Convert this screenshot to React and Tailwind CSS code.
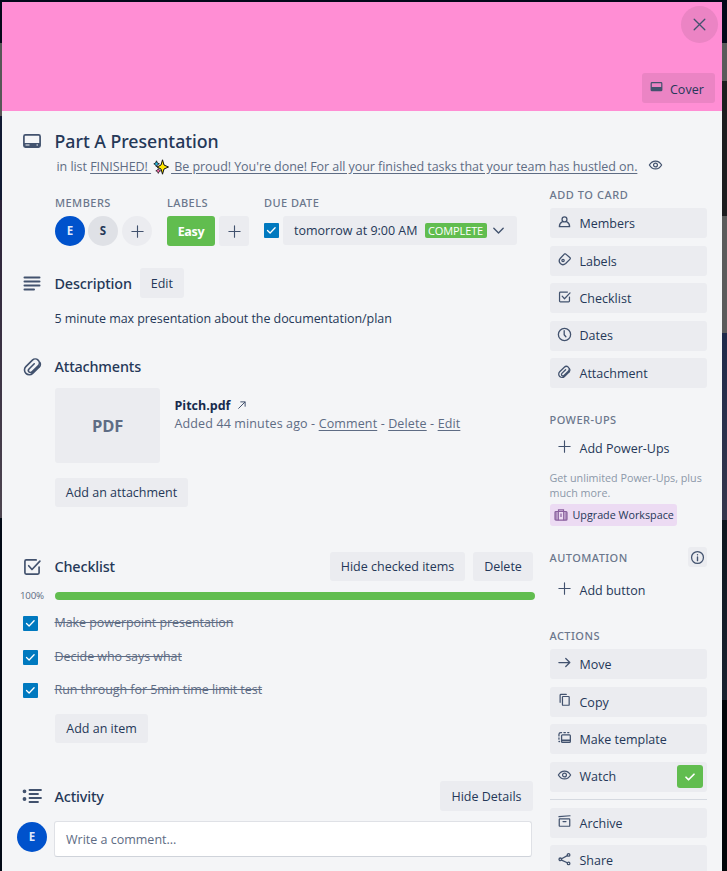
function Icon({ className = "h-[15px] w-[15px]", children, sw = 1.7 }) {
  return (
    <svg viewBox="0 0 24 24" className={`shrink-0 ${className}`} fill="none" stroke="currentColor" strokeWidth={sw} strokeLinecap="round" strokeLinejoin="round">
      {children}
    </svg>
  );
}

const PersonIcon = () => (
  <Icon className="h-[14px] w-[15px]" sw={2.2}>
    <circle cx="12" cy="7.5" r="4.2" />
    <path d="M8.5 11.5C5 13 3.2 15.8 3.2 20h17.6c0-4.200-1.800-7-5.300-8.500" />
  </Icon>
);
const LabelIcon = () => (
  <Icon className="h-[14px] w-[15px]" sw={2.2}>
    <path d="M12 3.200h1.800L21.500 10a1.500 1.500 0 0 1 0 2.200L14 19.600c-3 2.700-6.500 2.600-9 .2-2.500-2.600-2.500-6.300 0-9Z" />
    <circle cx="9.500" cy="14.500" r="2" />
  </Icon>
);
const CheckIcon = ({ className = "h-[14px] w-[15px]", sw = 2.1 }) => (
  <Icon className={className} sw={sw}>
    <path d="M17 3.500H5A1.500 1.500 0 0 0 3.500 5v14A1.500 1.500 0 0 0 5 20.500h14a1.500 1.500 0 0 0 1.500-1.500v-7" />
    <path d="m8 10.500 4 4.500L21.500 5" />
  </Icon>
);
const ClockIcon = () => (
  <Icon sw={2.1}>
    <circle cx="12" cy="12" r="9.800" />
    <path d="M11.500 6v6.500l2.700 3" />
  </Icon>
);
const ClipIcon = ({ className = "h-[14px] w-[14px]", sw = 2.2 }) => (
  <Icon className={className} sw={sw}>
    <path d="m21 11.500-8.200 8.100a5.700 5.700 0 0 1-8.200-8l7.900-7.800a4.800 4.800 0 0 1 6.900 6.700l-7.400 7.400a2.500 2.500 0 0 1-3.600-3.500l6.300-6.300" />
    <path d="m21 11.500c1.100-1.500 1.300-3.500.4-5" />
  </Icon>
);
const PlusIcon = ({ className }) => (
  <Icon className={className} sw={1.8}>
    <path d="M12 3v18M3 12h18" />
  </Icon>
);
const ArrowIcon = () => (
  <Icon sw={2}>
    <path d="M3 12h17M14 5.500l6.500 6.500-6.500 6.500" />
  </Icon>
);
const CopyIcon = () => (
  <Icon className="h-[14px] w-[15px]" sw={2.1}>
    <path d="M4.500 16V4A1.500 1.500 0 0 1 6 2.500h9" />
    <rect x="8.500" y="6" width="11.500" height="15" rx="1" />
  </Icon>
);
const TemplateIcon = () => (
  <Icon className="h-[14px] w-[15px]" sw={2.2}>
    <rect x="7" y="6.500" width="15" height="13" rx="1.500" />
    <path d="M8 16h13" strokeWidth="3" />
    <path d="M2.500 14v-2M2.500 8.500v-3a3 3 0 0 1 3-2.800h1.500M11 2.700h2.500M17.500 2.700h2M2.500 18h1" />
  </Icon>
);
const EyeIcon = () => (
  <Icon className="h-[14px] w-[15px]" sw={2.1}>
    <path d="M1.500 12C4 7.500 7.500 5.200 12 5.200S20 7.500 22.500 12C20 16.500 16.500 18.800 12 18.800S4 16.500 1.500 12Z" />
    <circle cx="12" cy="12" r="3.300" />
  </Icon>
);
const ArchiveIcon = () => (
  <Icon className="h-[14px] w-[15px]" sw={2.1}>
    <path d="M2.500 4.500 21.500 3" />
    <rect x="3" y="8.500" width="18" height="12.500" rx="1" />
    <path d="M9.500 13h5" />
  </Icon>
);
const ShareIcon = () => (
  <Icon className="h-[14px] w-[15px]" sw={2.2}>
    <circle cx="4.800" cy="12.500" r="2.200" />
    <circle cx="19" cy="5" r="2.200" />
    <circle cx="19" cy="19.500" r="2.200" />
    <path d="m7 11.500 9.800-5.300M7 13.800l9.800 4.700" />
  </Icon>
);

function Sparkles() {
  return (
    <svg viewBox="0 0 16 16" className="mx-[2px] inline-block h-[16px] w-[16px] align-[-4px]">
      <path d="M9.500 .8 11 6l4.500 2-4.500 2-1.500 5.200L8 10 4 8l4-2Z" fill="#ffe600" stroke="#111" strokeWidth="1" strokeLinejoin="round" />
      <path d="M3.500 1.800 4.400 4l2 .8-2 1-1 2-.9-2L.8 4.800l1.800-.8Z" fill="#22b8e0" stroke="#111" strokeWidth=".8" />
      <path d="M5.300 9.500 6 11l1.700.8L6 12.700l-.7 1.700-.8-1.700-1.700-.9L4.500 11Z" fill="#f469a9" stroke="#111" strokeWidth=".7" />
    </svg>
  );
}

function SideButton({ icon, label, labelClass = "mt-[3px]", children }) {
  return (
    <div className="mb-[7.500px] flex h-[30px] items-center rounded-[3px] bg-[#ebecf0] pr-1 pl-[7px] text-[#42526e]">
      <span className="-mt-[3px] flex w-[15px] justify-center">{icon}</span>
      <span className={`ml-2 flex-1 text-[#253858] ${labelClass}`}>{label}</span>
      {children}
    </div>
  );
}

function GhostButton({ label }) {
  return (
    <div className="flex h-[30px] items-center pl-[7px] text-[#42526e]">
      <span className="-mt-[3px]"><PlusIcon /></span>
      <span className="mt-[2px] ml-2 text-[#253858]">{label}</span>
    </div>
  );
}

function Caption({ children, className = "" }) {
  return (
    <h3 className={`font-['Noto_Sans',sans-serif] text-[11px] leading-[14px] font-medium tracking-[0.45px] text-[#6b778c] ${className}`}>{children}</h3>
  );
}

function Heading({ children, className = "" }) {
  return <h2 className={`font-['Noto_Sans',sans-serif] text-[14.400px] leading-5 font-medium tracking-[-0.15px] text-[#253858] ${className}`}>{children}</h2>;
}

function Button({ children, className = "h-[29px]" }) {
  return (
    <button className={`flex items-center justify-center rounded-[3px] bg-[#ebecf0] pt-[2px] text-[#253858] ${className}`}>{children}</button>
  );
}

function Checkbox() {
  return (
    <span className="flex h-[15px] w-[15px] shrink-0 items-center justify-center rounded-[1px] bg-[#0079bf] text-white">
      <svg viewBox="0 0 15 15" className="h-[15px] w-[15px]" fill="none" stroke="currentColor" strokeWidth="1.300" strokeLinecap="round" strokeLinejoin="round">
        <path d="m3.500 7.500 2.600 2.500 5-5.200" />
      </svg>
    </span>
  );
}

function Avatar({ children, className }) {
  return (
    <span className={`flex h-[30px] w-[30px] shrink-0 items-center justify-center rounded-full text-[11.500px] font-bold ${className}`}>{children}</span>
  );
}

function Gutter({ children }) {
  return <div className="flex w-[52.500px] shrink-0 items-center pl-[20px] text-[#42526e]">{children}</div>;
}

const items = ["Make powerpoint presentation", "Decide who says what", "Run through for 5min time limit test"];

function Main() {
  return (
    <main className="w-[547.500px] shrink-0 pt-[18px]">
      <div className="flex h-6 items-center">
        <Gutter>
          <svg viewBox="0 0 20 16" className="h-4 w-5" fill="none">
            <rect x="1.900" y="1.900" width="16.200" height="12.200" rx="1.500" stroke="currentColor" strokeWidth="1.700" />
            <path d="M2 10h16v4H2z" fill="currentColor" />
            <path d="M3.500 11.500h4v1h-4zM14.500 11.500h1.500v1h-1.500z" fill="#f4f5f7" />
          </svg>
        </Gutter>
        <h1 className="font-['Noto_Sans',sans-serif] text-[17.750px] leading-6 font-medium tracking-[-0.03px] text-[#253858]">Part A Presentation</h1>
      </div>
      <div className="flex h-[27px] items-center pl-[54.500px] whitespace-nowrap text-[#5e6c84]">
        <p className="leading-5 tracking-[-0.055px]">
          in list{" "}
          <a className="underline underline-offset-2">
            FINISHED! <Sparkles /> Be proud! You're done! For all your finished tasks that your team has hustled on.
          </a>
        </p>
        <span className="-mt-1 ml-[11px] text-[#42526e]"><EyeIcon /></span>
      </div>

      <div className="mt-4 flex pl-[53px]">
        <div className="w-[112px]">
          <Caption>MEMBERS</Caption>
          <div className="mt-1.5 flex">
            <Avatar className="bg-[#0052cc] text-[#dfe9fb]">E</Avatar>
            <Avatar className="ml-[3px] bg-[#dfe1e6] text-[#253858]">S</Avatar>
            <Avatar className="ml-1 bg-[#ebecf0] text-[#42526e]"><PlusIcon /></Avatar>
          </div>
        </div>
        <div className="w-[97px]">
          <Caption>LABELS</Caption>
          <div className="mt-1.5 flex gap-1">
            <span className="flex h-[30px] w-12 items-center justify-center rounded-[3px] bg-[#61bd4f] pt-[2px] font-bold tracking-[-0.3px] text-white">Easy</span>
            <span className="flex h-[30px] w-[30px] items-center justify-center rounded-[3px] bg-[#ebecf0] text-[#42526e]"><PlusIcon /></span>
          </div>
        </div>
        <div>
          <Caption>DUE DATE</Caption>
          <div className="mt-1.5 flex">
            <span className="mt-[7px]"><Checkbox /></span>
            <div className="ml-1 flex h-[29px] w-[234px] items-center rounded-[3px] bg-[#ebecf0] pl-[11px] text-[#253858]">
              <span className="mt-[2px]">tomorrow at 9:00 AM</span>
              <span className="ml-[7px] flex h-[15px] w-[62px] items-center justify-center rounded-[2px] bg-[#61bd4f] pt-px text-[11px] tracking-[-0.1px] text-white">COMPLETE</span>
              <Icon className="ml-[4px] h-[15px] w-[15px] text-[#42526e]" sw={2.2}><path d="m4.500 8.500 7.500 7.500 7.500-7.500" /></Icon>
            </div>
          </div>
        </div>
      </div>

      <div className="mt-[22px] flex h-[30px] items-center">
        <Gutter>
          <svg viewBox="0 0 20 16" className="h-4 w-5" stroke="currentColor" strokeWidth="2" strokeLinecap="round">
            <path d="M2.500 2.500h15M2.500 6.500h15M2.500 10.500h15M2.500 14.500h9.500" />
          </svg>
        </Gutter>
        <Heading className="mt-[2px]">Description</Heading>
        <Button className="ml-2 h-[30px] w-[44px]">Edit</Button>
      </div>
      <p className="mt-[11px] h-5 pl-[52.500px] leading-5 tracking-[-0.06px] text-[#253858]">5 minute max presentation about the documentation/plan</p>

      <div className="mt-[28px] flex h-5 items-center">
        <Gutter><ClipIcon className="h-5 w-5" sw={1.9} /></Gutter>
        <Heading>Attachments</Heading>
      </div>
      <div className="mt-[11px] flex pl-[53px]">
        <div className="flex h-[75px] w-[105px] items-center justify-center rounded-[3px] bg-[#ebecf0] pt-[2px] text-[16.500px] font-bold tracking-[-0.2px] text-[#5e6c84]">PDF</div>
        <div className="ml-[14.500px] pt-[9px] leading-[18px]">
          <div className="flex items-center font-bold text-[#172b4d]">
            Pitch.pdf
            <Icon className="-mt-[3px] ml-[7px] h-[10px] w-[10px] text-[#42526e]" sw={2.4}><path d="M4 20 19 5M9 4.500h10.500V15" /></Icon>
          </div>
          <div className="tracking-[0.13px] whitespace-nowrap text-[#5e6c84]">
            Added 44 minutes ago - <a className="underline underline-offset-2">Comment</a> - <a className="underline underline-offset-2">Delete</a> - <a className="underline underline-offset-2">Edit</a>
          </div>
        </div>
      </div>
      <Button className="mt-[15px] ml-[53px] h-[29px] w-[133px]">Add an attachment</Button>

      <div className="mt-[45px] flex h-[29px] items-center pr-[16.500px]">
        <Gutter><CheckIcon className="h-5 w-5" sw={2} /></Gutter>
        <Heading>Checklist</Heading>
        <Button className="ml-auto h-[29px] w-[135px]">Hide checked items</Button>
        <Button className="ml-2 h-[29px] w-[60px]">Delete</Button>
      </div>
      <div className="mt-[11px] flex h-2 items-center">
        <span className="w-[53px] shrink-0 pl-[18px] text-[9.750px] leading-none tracking-[-0.2px] text-[#5e6c84]">100%</span>
        <div className="h-2 w-[480px] rounded bg-[#61bd4f]" />
      </div>
      <ul className="mt-[7px]">
        {items.map((t) => (
          <li key={t} className="flex h-[33.500px] items-center pl-[21px]">
            <Checkbox />
            <span className="-mt-px ml-[16.500px] leading-5 tracking-[-0.05px] text-[#5e6c84] line-through">{t}</span>
          </li>
        ))}
      </ul>
      <Button className="mt-[6.500px] ml-[53px] h-[29px] w-[93px]">Add an item</Button>

      <div className="mt-[38px] flex h-[30px] items-center pr-[16.500px]">
        <Gutter>
          <svg viewBox="0 0 20 16" className="h-4 w-5" stroke="currentColor" strokeWidth="1.800" strokeLinecap="round" fill="currentColor">
            <path d="M7.500 2h11.500M7.500 6h8.500M7.500 10h11.500M7.500 14h8.500" />
            <circle cx="2.500" cy="3.300" r="1" />
            <circle cx="2.500" cy="11" r="1" />
          </svg>
        </Gutter>
        <Heading className="mt-[2px]">Activity</Heading>
        <Button className="ml-auto h-[30px] w-[93px]">Hide Details</Button>
      </div>
      <div className="mt-2.5 flex pl-[15px]">
        <Avatar className="mt-px bg-[#0052cc] text-[#dfe9fb]">E</Avatar>
        <div className="ml-[7px] flex h-9 w-[478px] items-center rounded-[3px] border border-[#dfe1e6] border-b-[#cfd3da] bg-white pt-[2px] pl-[11px] text-[#5e6c84]">Write a comment...</div>
      </div>
    </main>
  );
}

function Sidebar() {
  return (
    <aside className="w-[157.500px] pt-[77px]">
      <Caption className="mb-[6px] tracking-[0.55px]!">ADD TO CARD</Caption>
      <SideButton icon={<PersonIcon />} label="Members" />
      <SideButton icon={<LabelIcon />} label="Labels" />
      <SideButton icon={<CheckIcon />} label="Checklist" />
      <SideButton icon={<ClockIcon />} label="Dates" labelClass="mt-px" />
      <SideButton icon={<ClipIcon />} label="Attachment" />

      <Caption className="mt-[25px] mb-[6px]">POWER-UPS</Caption>
      <GhostButton label="Add Power-Ups" />
      <p className="mt-[7.500px] text-[10.750px] leading-[15px] text-[#8c98a9]">Get unlimited Power-Ups, plus much more.</p>
      <div className="mt-[3.500px] flex h-[22px] w-[127px] items-center rounded-[3px] bg-[#ecdbf3] pl-[4px] text-[10.750px] text-[#253858]">
        <svg viewBox="0 0 14 12" className="mr-[5px] h-3 w-[14px] shrink-0" fill="none" stroke="#89609e" strokeWidth="1.200">
          <path d="M4.500 2.500V.8h5v1.700M2 2.500v8.500M12 2.500v8.500" />
          <rect x="1" y="2.500" width="12" height="8.700" rx="1" />
          <path d="M4.200 2.500v8.700M9.800 2.500v8.700" strokeWidth="1.400" />
          <path d="M7 4.500v3.500" />
        </svg>
        Upgrade Workspace
      </div>

      <div className="mt-[21px] flex h-5 items-center justify-between">
        <Caption className="mt-[2px]">AUTOMATION</Caption>
        <span className="flex h-5 w-[19px] items-center justify-center rounded-[3px] bg-[#ebecf0] text-[#42526e]">
          <Icon sw={2}>
            <circle cx="12" cy="12" r="9.500" />
            <path d="M12 11v6M12 7.500v.2" strokeWidth="2.200" />
          </Icon>
        </span>
      </div>
      <div className="mt-[8px]"><GhostButton label="Add button" /></div>

      <Caption className="mt-[24px] mb-[6px]">ACTIONS</Caption>
      <SideButton icon={<ArrowIcon />} label="Move" />
      <SideButton icon={<CopyIcon />} label="Copy" />
      <SideButton icon={<TemplateIcon />} label="Make template" />
      <SideButton icon={<EyeIcon />} label="Watch" labelClass="mt-[2px]">
        <span className="flex h-[23px] w-[26px] items-center justify-center rounded-[3px] bg-[#61bd4f] text-white">
          <Icon className="h-3 w-3" sw={3.5}><path d="m4 12.500 5 5L20 6.500" /></Icon>
        </span>
      </SideButton>
      <div className="mb-[7.500px] h-px bg-[#d5d9e0]" />
      <SideButton icon={<ArchiveIcon />} label="Archive" />
      <SideButton icon={<ShareIcon />} label="Share" />
    </aside>
  );
}

export default function App() {
  return (
    <div className="flex h-[871px] w-[727px] overflow-hidden bg-[#04081a] font-['Open_Sans','Noto_Sans',sans-serif] text-[12.500px]">
      <div className="flex w-[2px] shrink-0 flex-col">
        <div className="h-[43px] bg-[#05081a]" />
        <div className="h-[73px] bg-[#575757]" />
        <div className="h-[84px] bg-[#111a33]" />
        <div className="h-[318px] bg-linear-to-b from-[#2a2138] to-[#4d4550]" />
        <div className="flex-1 bg-[#020a16]" />
      </div>
      <div className="flex w-[720px] shrink-0 flex-col pt-[2px]">
        <header className="flex h-[109px] shrink-0 flex-col items-end justify-between bg-[#ff8ed4] pt-[4px] pb-[8px]">
          <button className="mr-[4px] flex h-[37px] w-[37px] items-center justify-center rounded-full bg-[#eb84c4] text-[#42526e]">
            <Icon sw={2.1}><path d="M3.500 3.500l17 17M20.500 3.500l-17 17" /></Icon>
          </button>
          <button className="mr-[7px] flex h-[30px] w-[73px] items-center rounded-[3px] bg-[#eb84c4] pl-[8px] text-[#253858]">
            <svg viewBox="0 0 13 12" className="-mt-[2px] h-3 w-[13px] text-[#42526e]">
              <rect x="1.200" y="1.700" width="10.600" height="8" rx=".8" fill="none" stroke="currentColor" strokeWidth="1.200" />
              <path d="M1 6h11v3.700H1z" fill="currentColor" />
            </svg>
            <span className="mt-[4px] ml-[7px]">Cover</span>
          </button>
        </header>
        <div className="flex h-[760px] overflow-hidden bg-[#f4f5f7]">
          <Main />
          <Sidebar />
        </div>
      </div>
      <div className="flex flex-1 flex-col">
        <div className="h-[43px] bg-[#04081a]" />
        <div className="h-[38px] bg-[#5a5a5a]" />
        <div className="h-[135px] bg-[#1d1d1f]" />
        <div className="h-[117px] bg-[#5b5b5b]" />
        <div className="h-[187px] bg-linear-to-b from-[#1f2a4a] to-[#35364c]" />
        <div className="h-[180px] bg-linear-to-b from-[#0e161e] to-[#1a2230]" />
        <div className="flex-1 bg-[#020609]" />
      </div>
    </div>
  );
}
